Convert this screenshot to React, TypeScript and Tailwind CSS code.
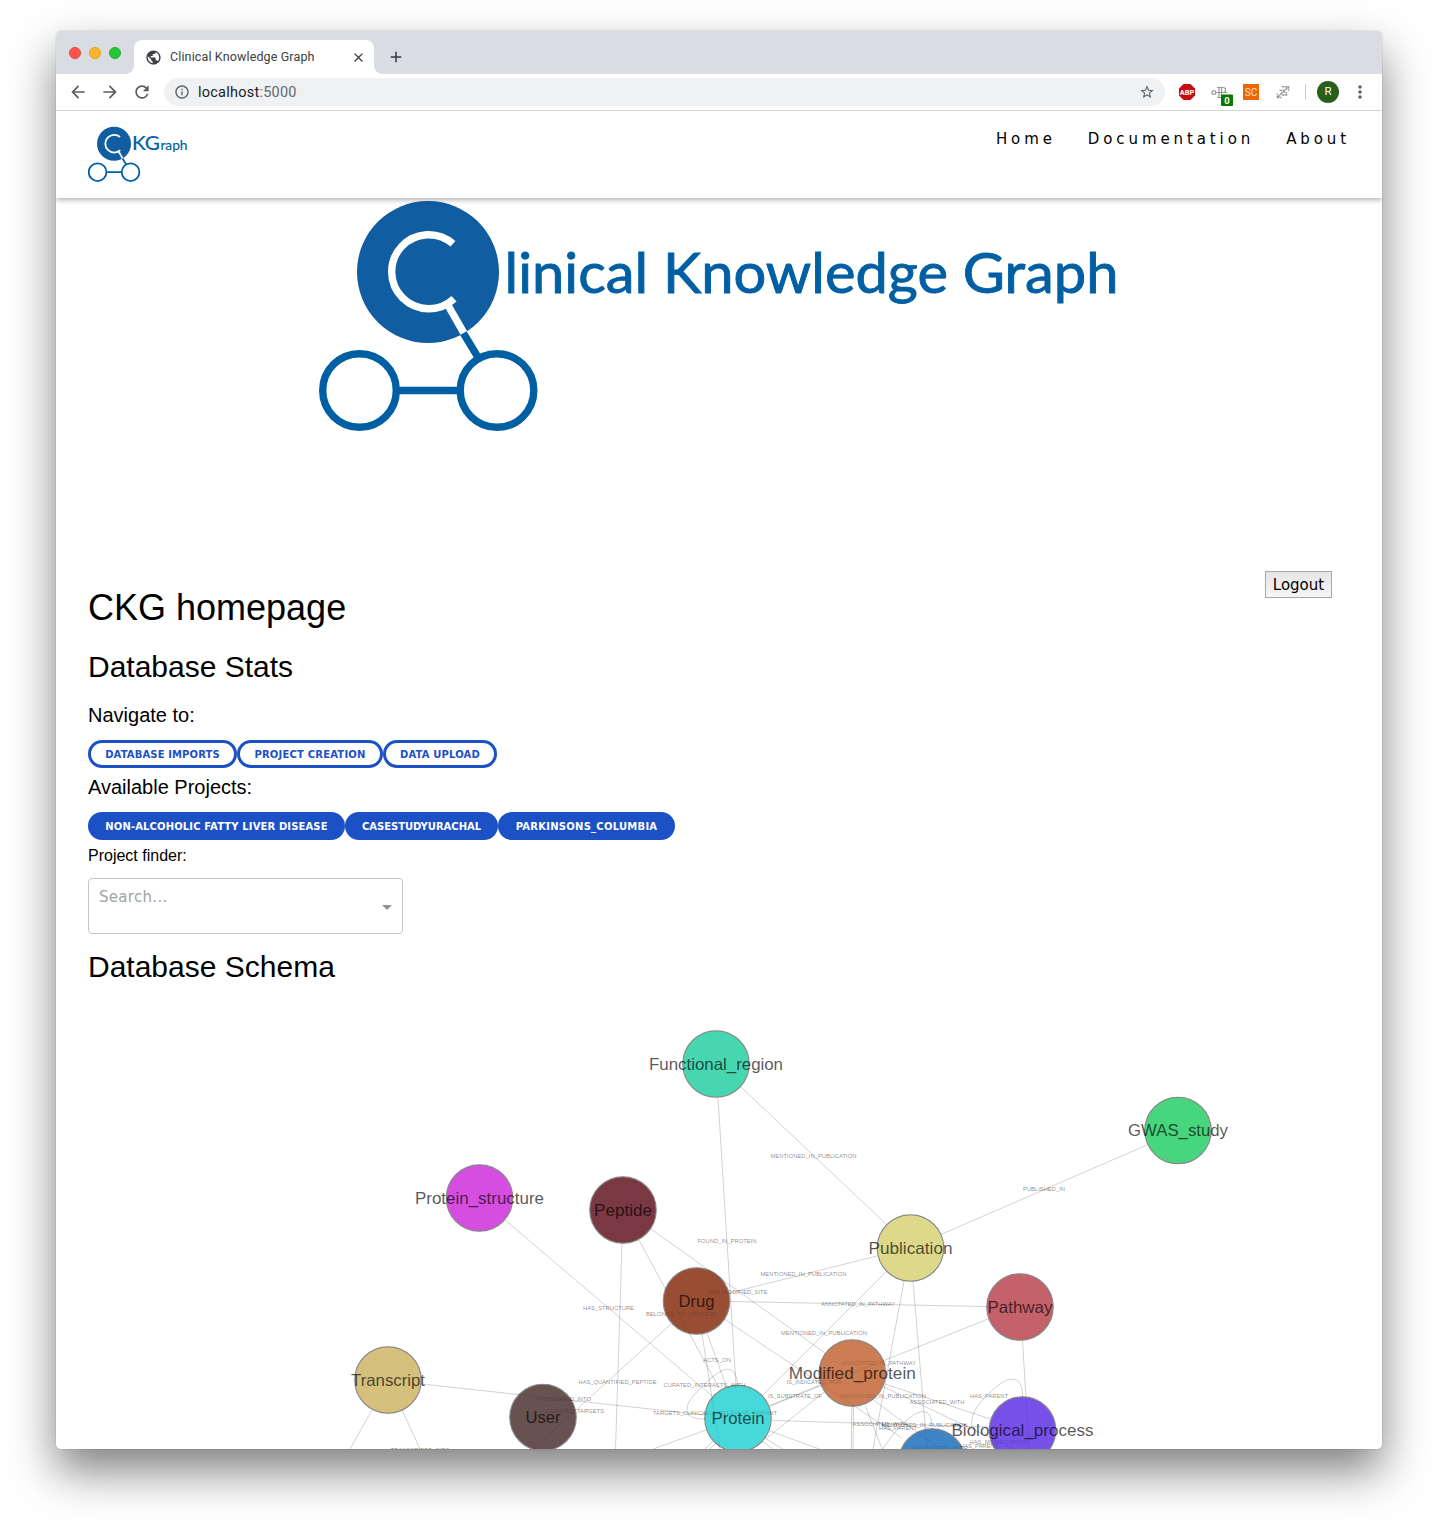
import React from "react";
import {
  MdAdd,
  MdArrowBack,
  MdArrowForward,
  MdClose,
  MdInfoOutline,
  MdMoreVert,
  MdPublic,
  MdRefresh,
  MdStarBorder,
} from "react-icons/md";

function Mark() {
  return (
    <g fill="none" stroke="#005fa3" strokeWidth="7.4">
      <circle cx="428" cy="272" r="71" fill="#115da1" stroke="none" />
      <path d="M463 332.500L479 359" />
      <path d="M447.500 304.500L463.800 332.800" stroke="#fff" />
      <path d="M453 243.800A37 37 0 1 0 454 298.700" stroke="#fff" />
      <path d="M399 390.500H458" />
      <circle cx="359.500" cy="390.500" r="36.800" />
      <circle cx="497" cy="390.500" r="36.800" />
    </g>
  );
}

function TabStrip() {
  return (
    <div className="flex h-[43px] bg-[#d9dce1]">
      <div className="flex w-[78px] gap-2 pt-4 pl-[13px]">
        <span className="size-3 rounded-full border border-[#e0443e] bg-[#ff544d]" />
        <span className="size-3 rounded-full border border-[#dfa023] bg-[#ffb429]" />
        <span className="size-3 rounded-full border border-[#1dad2b] bg-[#25c63a]" />
      </div>
      <div className="relative mt-[9px] flex h-[34px] w-[240px] items-center rounded-t-lg bg-white pl-3">
        <span className="absolute bottom-0 -left-2 size-2 bg-[radial-gradient(circle_at_0_0,#d9dce1_7.5px,#fff_8px)]" />
        <span className="absolute -right-2 bottom-0 size-2 bg-[radial-gradient(circle_at_100%_0,#d9dce1_7.5px,#fff_8px)]" />
        <MdPublic className="-ml-px size-[17px] text-[#3c3f43]" />
        <span className="ml-2 w-[182px] text-[12.5px] tracking-[0.13px] whitespace-nowrap text-[#3c4043]">
          Clinical Knowledge Graph
        </span>
        <MdClose className="-ml-px size-[15px] text-[#3c4043]" />
      </div>
      <MdAdd className="mt-[17px] ml-[13px] size-[18px] text-[#33363a]" />
    </div>
  );
}

function Toolbar() {
  return (
    <div className="relative z-20 flex h-[37px] items-center border-b border-[#d2d4d6] bg-white pl-3 text-[#5a5d61]">
      <MdArrowBack className="size-5" />
      <MdArrowForward className="ml-3 size-5" />
      <MdRefresh className="ml-3 size-5" />
      <div className="ml-3 flex h-7 w-[1001px] items-center rounded-full bg-[#eff1f2] pr-[10px] pl-[10px]">
        <MdInfoOutline className="size-4" />
        <span className="ml-2 grow pt-px text-[14.5px] tracking-[0.24px] text-[#202124]">
          localhost<span className="text-[#66696d]">:5000</span>
        </span>
        <MdStarBorder className="size-4" />
      </div>
      <svg className="ml-[13px] size-[18px]" viewBox="0 0 18 18">
        <path d="M5.500 1H12.500L17 5.500V12.500L12.500 17H5.500L1 12.500V5.500Z" fill="#c70d12" />
        <text x="9" y="12" fontSize="8" fontWeight="700" fill="#fff" textAnchor="middle" textLength="14.500" lengthAdjust="spacingAndGlyphs">
          ABP
        </text>
      </svg>
      <svg className="ml-[14px] h-[27px] w-[24px]" viewBox="0 0 24 27">
        <g fill="none" stroke="#999" strokeWidth="1.200">
          <circle cx="3.800" cy="13.500" r="1.900" />
          <path d="M6 13.500H17.500M7 8.500H13a2.600 2.600 0 0 1 0 5.200M9 8.500V18.500M7 18.500H11M11.500 8.500V17" />
        </g>
        <rect x="11" y="15.500" width="12" height="11.500" rx="1" fill="#007a00" />
        <text x="17" y="24.800" fontSize="9.500" fontWeight="700" fill="#fff" textAnchor="middle">
          0
        </text>
      </svg>
      <span className="ml-[9px] flex size-4 items-center justify-center bg-[#ec6608] text-[10px] text-[#ffe2c8]">
        SC
      </span>
      <svg className="ml-[17px] size-[14px]" viewBox="0 0 14 14" fill="none" stroke="#9a9a9a" strokeWidth="1.500" strokeDasharray="2.500 0.500">
        <path d="M1.500 13V8.500M1 12.500H5.500M2 12L5 9M5 9L9 5L12.500 2M6 1.800H12.500V6M3.500 5.500H8.500V8M6 10H10.500V7" />
      </svg>
      <span className="ml-[15px] h-4 w-px bg-[#c8cacd]" />
      <span className="ml-[11px] flex size-[22px] items-center justify-center rounded-full bg-[#2a5e1b] text-[11.500px] text-white">
        R
      </span>
      <MdMoreVert className="ml-[11px] size-5" />
    </div>
  );
}

function SiteHeader() {
  return (
    <header className="relative z-10 flex h-[87px] justify-between bg-white pr-8 pl-8 shadow-[0_1px_6px_rgba(0,0,0,0.4)]">
      <svg className="mt-[14px] h-[60px] w-[104px]" viewBox="88 125 104 60">
        <g transform="translate(11.300 78.500) scale(0.24)">
          <Mark />
        </g>
        <g fill="#005fa3" stroke="#005fa3" strokeWidth="0.200" fontFamily="Lato, sans-serif">
          <text x="132" y="149.500" fontSize="20" textLength="28" lengthAdjust="spacingAndGlyphs">
            KG
          </text>
          <text x="160.500" y="149.500" fontSize="14" textLength="27" lengthAdjust="spacingAndGlyphs">
            raph
          </text>
        </g>
      </svg>
      <nav className="flex gap-8 pt-[18px] text-[15px] leading-[20px] tracking-[3.9px] text-black [font-family:'DejaVu_Sans',sans-serif]">
        <a>Home</a>
        <a>Documentation</a>
        <a>About</a>
      </nav>
    </header>
  );
}

const navButtons = [
  { label: "Database Imports", size: "w-[149px] tracking-[0.12px]" },
  { label: "Project Creation", size: "w-[146px] tracking-[0.2px]" },
  { label: "Data Upload", size: "w-[114px] tracking-[0.15px]" },
];

const projects = [
  { label: "Non-alcoholic fatty liver disease", size: "w-[257px] tracking-[0.13px]" },
  { label: "CaseStudyUrachal", size: "w-[153px] tracking-[-0.02px]" },
  { label: "Parkinsons_Columbia", size: "w-[177px] tracking-[0.25px]" },
];

type Point = [number, number];

const nodes: { name: string; at: Point; fill: string; width: number }[] = [
  { name: "Functional_region", at: [716, 1064], fill: "#46d6b0", width: 134 },
  { name: "GWAS_study", at: [1178, 1130.5], fill: "#48d57e", width: 100 },
  { name: "Protein_structure", at: [479.5, 1198], fill: "#d64fe0", width: 129 },
  { name: "Peptide", at: [623, 1210], fill: "#793942", width: 58 },
  { name: "Publication", at: [910.5, 1248], fill: "#ddd88a", width: 84 },
  { name: "Drug", at: [696.5, 1301], fill: "#994e34", width: 36 },
  { name: "Pathway", at: [1020, 1307], fill: "#c5616b", width: 65 },
  { name: "Transcript", at: [388, 1380], fill: "#d5c07e", width: 74 },
  { name: "Modified_protein", at: [852.3, 1373], fill: "#cc7d53", width: 127 },
  { name: "User", at: [543, 1417.5], fill: "#675152", width: 35 },
  { name: "Protein", at: [738, 1418.5], fill: "#47d8d9", width: 53 },
  { name: "", at: [932, 1462], fill: "#3e85c4", width: 0 },
  { name: "Biological_process", at: [1022.5, 1430], fill: "#7650e9", width: 142 },
];

const edges = [
  "M741 1087L886 1224",
  "M718 1098L736 1385",
  "M1147 1145L942 1234",
  "M505 1220L712 1396",
  "M622 1244L615.5 1449",
  "M639 1240L719 1388",
  "M651 1229L825 1353",
  "M729 1293L877 1256",
  "M730 1301.5L986 1306.5",
  "M671 1324L533 1449",
  "M702 1334L720 1449",
  "M707 1333L726 1386",
  "M724 1319L902 1438",
  "M886 1272L763 1395",
  "M904 1281L873 1449",
  "M913 1281L927 1449",
  "M988 1319L770 1406",
  "M820 1385L770 1405.5",
  "M1022.500 1340L1029 1449",
  "M422 1384L705 1415",
  "M372 1410L350 1449",
  "M402 1410L420 1449",
  "M772 1420.500L990 1427",
  "M767 1438L824 1392",
  "M770 1431L822 1450",
  "M765 1438L784 1450",
  "M762 1441L774 1450",
  "M706 1430L653 1449",
  "M713 1441L705 1449",
  "M716 1443L710 1449",
  "M851.800 1406L851.300 1449",
  "M853.500 1406L853 1449",
  "M865 1405L882 1449",
  "M885 1384L990 1419",
  "M884 1387L1014 1449",
  "M872 1399L940 1449",
  "M707 1419C680 1420 682 1405 702 1387C718 1370 736 1358 738 1386",
  "M972 1426C970 1410 985 1396 1000 1384C1013 1375 1023 1378 1022.500 1397",
  "M882 1450C893 1433 908 1416 920 1412C930 1410 932 1417 932 1430",
];

const edgeLabels: [string, number, number, number][] = [
  ["MENTIONED_IN_PUBLICATION", 813.5, 1156, 86],
  ["PUBLISHED_IN", 1044, 1189, 42],
  ["FOUND_IN_PROTEIN", 727, 1241, 59],
  ["MENTIONED_IN_PUBLICATION", 803.5, 1274, 86],
  ["HAS_MODIFIED_SITE", 737.5, 1292, 60],
  ["HAS_STRUCTURE", 608.5, 1308, 51],
  ["ANNOTATED_IN_PATHWAY", 858, 1304, 74],
  ["BELONGS_TO_PROTEIN", 680.5, 1314, 69],
  ["MENTIONED_IN_PUBLICATION", 824, 1333, 86],
  ["ACTS_ON", 717, 1360, 28],
  ["ANNOTATED_IN_PATHWAY", 879, 1363, 74],
  ["HAS_QUANTIFIED_PEPTIDE", 617.5, 1382, 78],
  ["CURATED_INTERACTS_WITH", 704.5, 1385, 82],
  ["IS_INDICATED_FOR", 814, 1382, 55],
  ["IS_SUBSTRATE_OF", 795, 1396, 54],
  ["MENTIONED_IN_PUBLICATION", 883, 1396, 86],
  ["TRANSLATED_INTO", 563.5, 1399, 55],
  ["CURATED_TARGETS", 575, 1411, 58],
  ["TARGETS_CLINICALLY_RELEVANT_VARIANT", 715, 1413, 124],
  ["ASSOCIATED_WITH", 937, 1402, 55],
  ["HAS_PARENT", 989, 1396, 38],
  ["ASSOCIATED_WITH", 880, 1424, 55],
  ["MENTIONED_IN_PUBLICATION", 924.5, 1425, 86],
  ["HAS_PARENT", 898, 1428, 38],
  ["HAS_MODIFICATION", 998, 1442, 57],
  ["HAS_PARENT", 979, 1446, 38],
  ["ASSOCIATED_WITH", 940, 1448, 55],
  ["TRANSCRIBED_INTO", 420, 1450, 59],
];

function SchemaGraph() {
  return (
    <svg className="block h-[465px] w-[1326px]" viewBox="56 984 1326 465" fontFamily="'Liberation Sans', sans-serif">
      {nodes.map((n) => (
        <circle key={n.fill} cx={n.at[0]} cy={n.at[1]} r="33.2" fill={n.fill} stroke="#888" strokeWidth="1.200" />
      ))}
      <g fill="none" stroke="#000" strokeOpacity="0.18" strokeWidth="1">
        {edges.map((d) => (
          <path key={d} d={d} />
        ))}
      </g>
      <g fill="#000" fillOpacity="0.48" fontSize="6" textAnchor="middle">
        {edgeLabels.map(([text, x, y, w], i) => (
          <text key={i} x={x} y={y + 2.1} textLength={w} lengthAdjust="spacingAndGlyphs">
            {text}
          </text>
        ))}
      </g>
      {/* translucent veil that fades edges and labels where they cross a node */}
      {nodes.map((n) => (
        <circle key={n.fill} cx={n.at[0]} cy={n.at[1]} r="32.6" fill={n.fill} fillOpacity="0.6" />
      ))}
      <g fill="#000" fillOpacity="0.67" fontSize="16.500" textAnchor="middle">
        {nodes.filter((n) => n.name).map((n) => (
          <text key={n.name} x={n.at[0]} y={n.at[1] + 5.5} textLength={n.width} lengthAdjust="spacingAndGlyphs">
            {n.name}
          </text>
        ))}
      </g>
    </svg>
  );
}

export default function App() {
  return (
    <div className="h-[1529px] w-[1438px] overflow-hidden bg-white pt-[31px] pl-14 [font-family:Roboto,sans-serif]">
      <div className="h-[1418px] w-[1326px] rounded-[5px] shadow-[0_0_1px_rgba(0,0,0,0.5),0_22px_46px_rgba(0,0,0,0.5)]">
        <div className="flex h-full flex-col overflow-hidden rounded-[5px] bg-white">
          <TabStrip />
          <Toolbar />
          <SiteHeader />
          <svg className="h-[373px] w-full shrink-0" viewBox="56 198 1326 373">
            <Mark />
            <text
              x="504.500"
              y="293"
              fontFamily="Lato, sans-serif"
              fontSize="56.500"
              fill="#005fa3"
              stroke="#005fa3"
              strokeWidth="0.900"
              textLength="614"
              lengthAdjust="spacingAndGlyphs"
            >
              linical Knowledge Graph
            </text>
          </svg>
          <main className="flex flex-col text-black [font-family:'Liberation_Sans',sans-serif]">
            <div className="flex h-[57px] items-start justify-between pr-[50px] pl-8">
              <h1 className="mt-4 text-[36px] leading-[41px]">CKG homepage</h1>
              <button className="h-[27px] w-[67px] border border-[#a6a6a6] bg-linear-to-b from-[#e6e6e6] to-[#f6f6f6] text-[15px] leading-[24px] [font-family:'DejaVu_Sans',sans-serif]">
                Logout
              </button>
            </div>
            <div className="pl-8">
              <h2 className="mt-[22px] text-[30px] leading-[34px]">Database Stats</h2>
              <h4 className="mt-5 text-[20px] leading-[23px]">Navigate to:</h4>
              <div className="mt-[13px] flex">
                {navButtons.map((b) => (
                  <button
                    key={b.label}
                    className={`${b.size} h-7 rounded-[14px] border-3 border-[#1c50c5] bg-white pt-px text-center text-[10px] leading-[21px] font-bold whitespace-nowrap text-[#1c50c5] uppercase [font-family:'DejaVu_Sans',sans-serif]`}
                  >
                    {b.label}
                  </button>
                ))}
              </div>
              <h4 className="mt-2 text-[20px] leading-[23px]">Available Projects:</h4>
              <div className="mt-[13px] flex">
                {projects.map((b) => (
                  <button
                    key={b.label}
                    className={`${b.size} h-7 rounded-[14px] bg-[#1c50c5] pt-px text-center text-[10px] leading-[27px] font-bold whitespace-nowrap text-white uppercase [font-family:'DejaVu_Sans',sans-serif]`}
                  >
                    {b.label}
                  </button>
                ))}
              </div>
              <p className="mt-[7px] text-base leading-[18px]">Project finder:</p>
              <div className="mt-[13px] flex h-14 w-[315px] justify-between rounded-[4px] border border-[#c4c4c4] pr-[10px] pl-[10px]">
                <span className="pt-2 text-[15px] leading-[20px] tracking-[0.3px] text-[#a3a3a3] [font-family:'DejaVu_Sans',sans-serif]">
                  Search...
                </span>
                <span className="mt-[26px] size-0 border-x-5 border-t-5 border-x-transparent border-t-[#949494]" />
              </div>
              <h2 className="mt-4 text-[30px] leading-[34px]">Database Schema</h2>
            </div>
            <SchemaGraph />
          </main>
        </div>
      </div>
    </div>
  );
}
